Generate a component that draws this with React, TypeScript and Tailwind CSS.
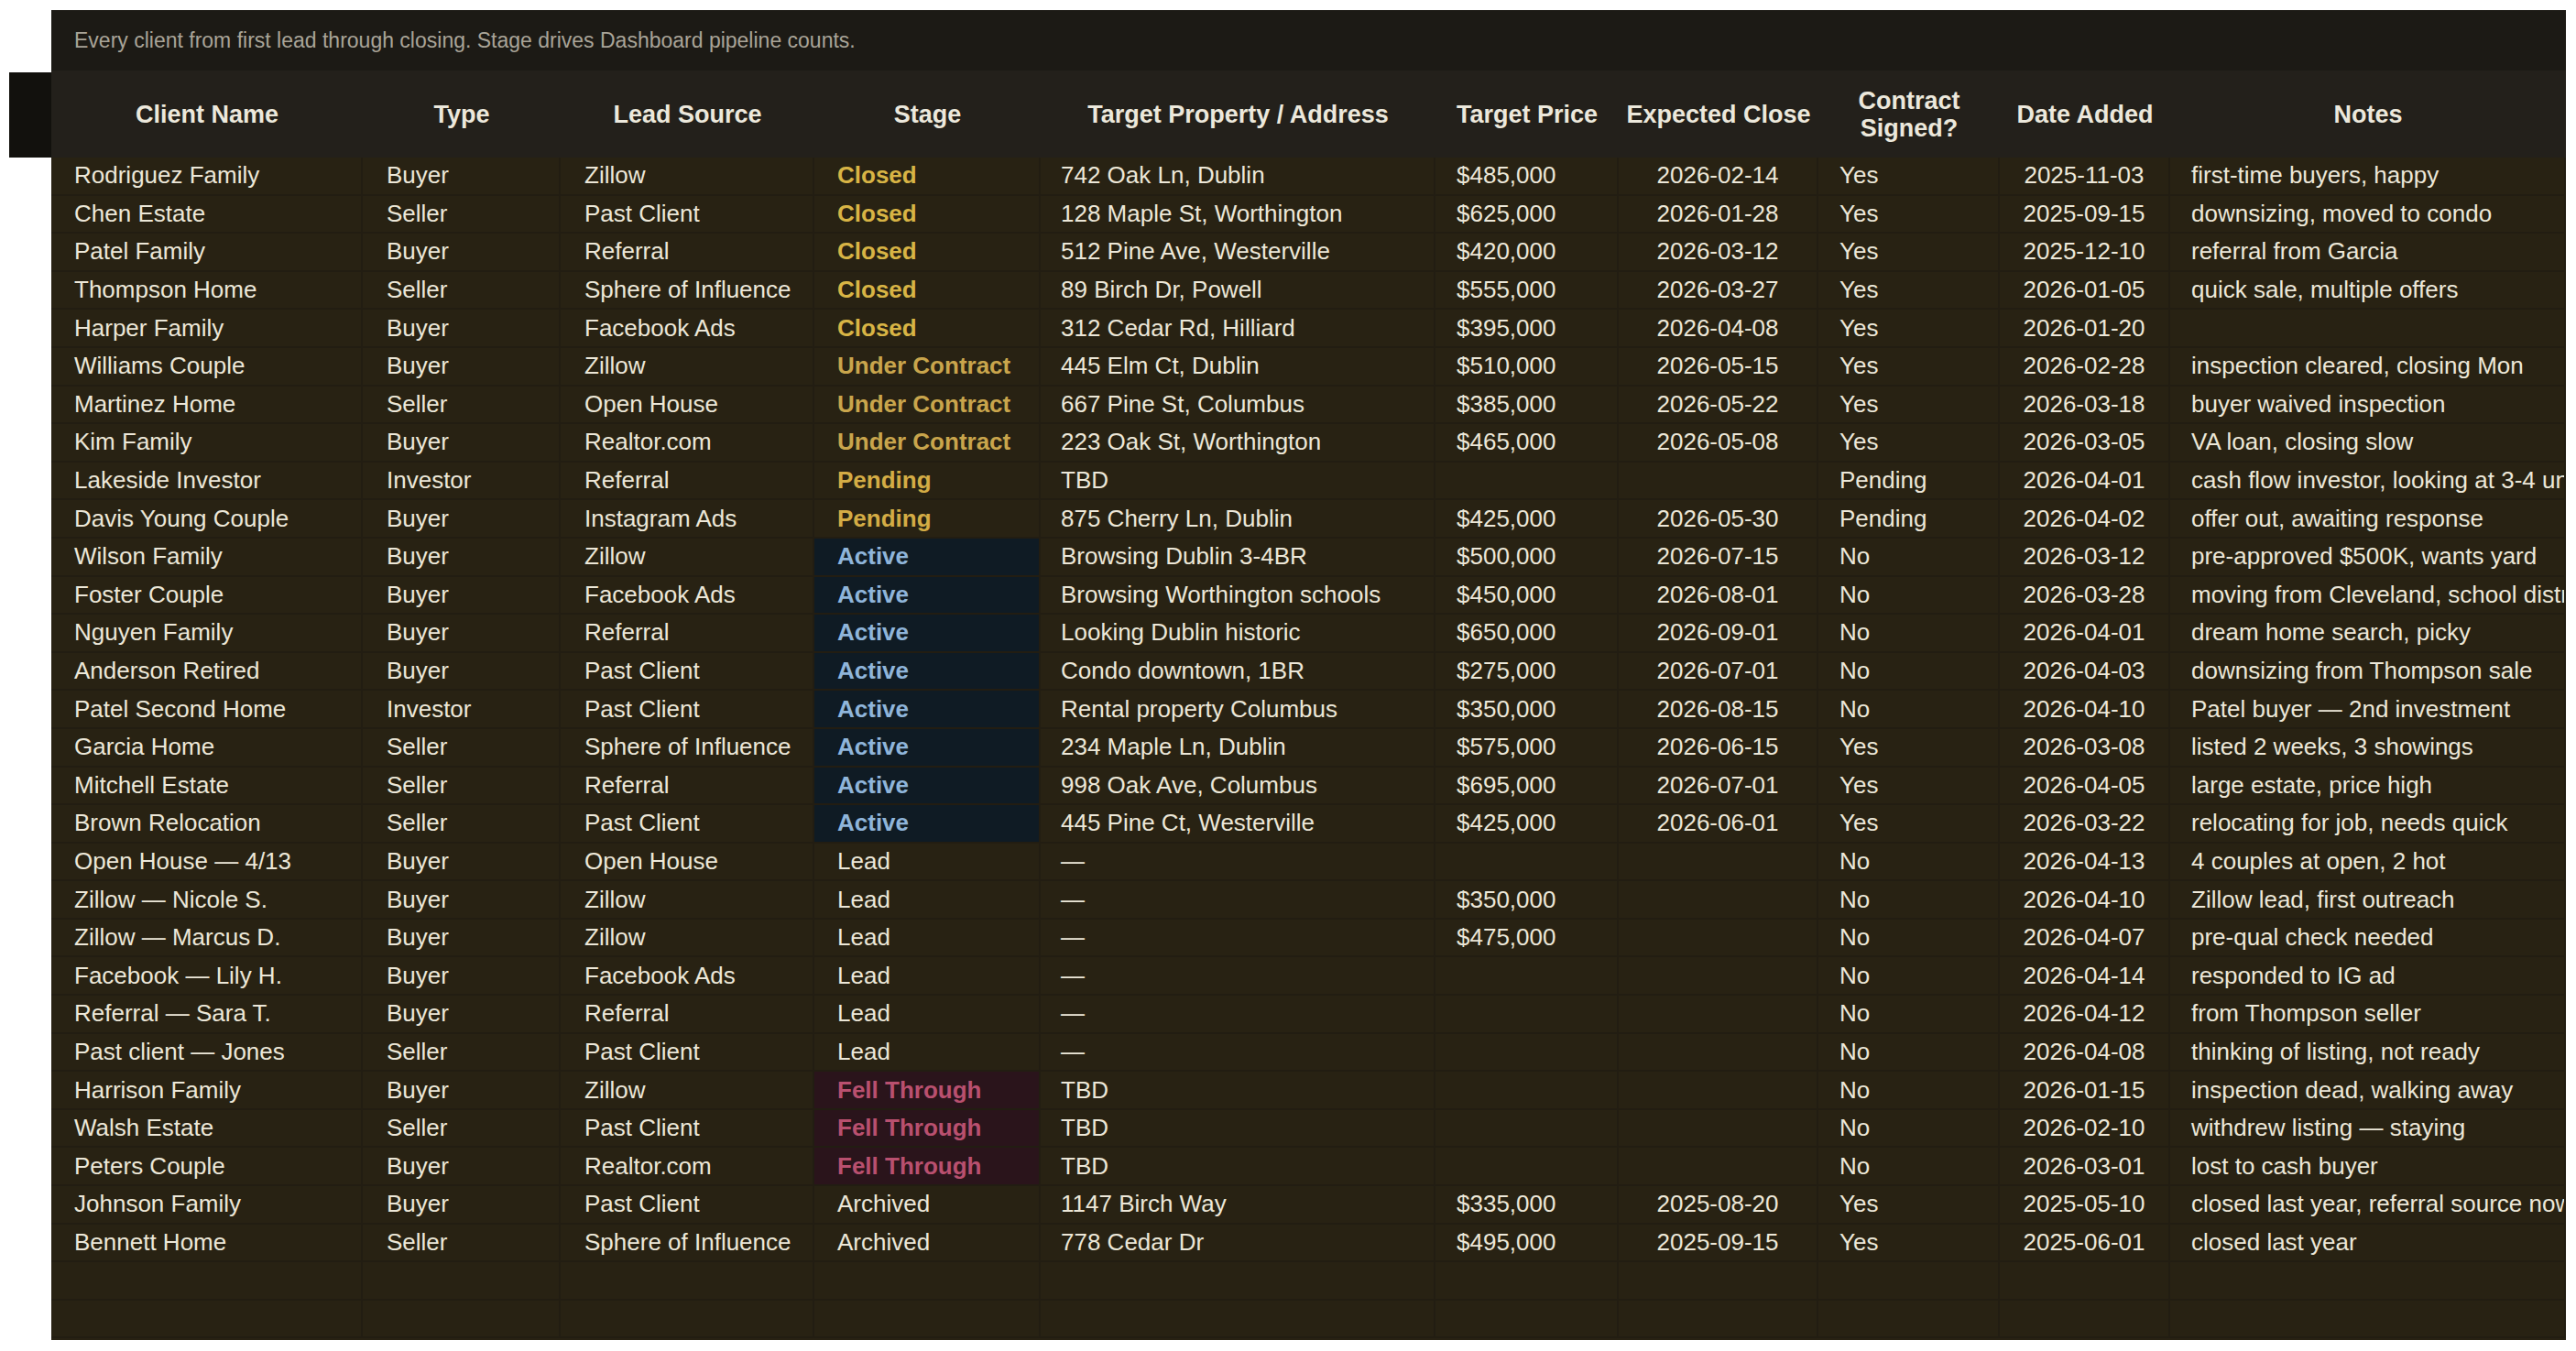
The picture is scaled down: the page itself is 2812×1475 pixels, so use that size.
import React from "react";

type Row = [string, string, string, string, string, string, string, string, string, string];

const rows: Row[] = [
  ["Rodriguez Family", "Buyer", "Zillow", "Closed", "742 Oak Ln, Dublin", "$485,000", "2026-02-14", "Yes", "2025-11-03", "first-time buyers, happy"],
  ["Chen Estate", "Seller", "Past Client", "Closed", "128 Maple St, Worthington", "$625,000", "2026-01-28", "Yes", "2025-09-15", "downsizing, moved to condo"],
  ["Patel Family", "Buyer", "Referral", "Closed", "512 Pine Ave, Westerville", "$420,000", "2026-03-12", "Yes", "2025-12-10", "referral from Garcia"],
  ["Thompson Home", "Seller", "Sphere of Influence", "Closed", "89 Birch Dr, Powell", "$555,000", "2026-03-27", "Yes", "2026-01-05", "quick sale, multiple offers"],
  ["Harper Family", "Buyer", "Facebook Ads", "Closed", "312 Cedar Rd, Hilliard", "$395,000", "2026-04-08", "Yes", "2026-01-20", ""],
  ["Williams Couple", "Buyer", "Zillow", "Under Contract", "445 Elm Ct, Dublin", "$510,000", "2026-05-15", "Yes", "2026-02-28", "inspection cleared, closing Mon"],
  ["Martinez Home", "Seller", "Open House", "Under Contract", "667 Pine St, Columbus", "$385,000", "2026-05-22", "Yes", "2026-03-18", "buyer waived inspection"],
  ["Kim Family", "Buyer", "Realtor.com", "Under Contract", "223 Oak St, Worthington", "$465,000", "2026-05-08", "Yes", "2026-03-05", "VA loan, closing slow"],
  ["Lakeside Investor", "Investor", "Referral", "Pending", "TBD", "", "", "Pending", "2026-04-01", "cash flow investor, looking at 3-4 units"],
  ["Davis Young Couple", "Buyer", "Instagram Ads", "Pending", "875 Cherry Ln, Dublin", "$425,000", "2026-05-30", "Pending", "2026-04-02", "offer out, awaiting response"],
  ["Wilson Family", "Buyer", "Zillow", "Active", "Browsing Dublin 3-4BR", "$500,000", "2026-07-15", "No", "2026-03-12", "pre-approved $500K, wants yard"],
  ["Foster Couple", "Buyer", "Facebook Ads", "Active", "Browsing Worthington schools", "$450,000", "2026-08-01", "No", "2026-03-28", "moving from Cleveland, school district"],
  ["Nguyen Family", "Buyer", "Referral", "Active", "Looking Dublin historic", "$650,000", "2026-09-01", "No", "2026-04-01", "dream home search, picky"],
  ["Anderson Retired", "Buyer", "Past Client", "Active", "Condo downtown, 1BR", "$275,000", "2026-07-01", "No", "2026-04-03", "downsizing from Thompson sale"],
  ["Patel Second Home", "Investor", "Past Client", "Active", "Rental property Columbus", "$350,000", "2026-08-15", "No", "2026-04-10", "Patel buyer — 2nd investment"],
  ["Garcia Home", "Seller", "Sphere of Influence", "Active", "234 Maple Ln, Dublin", "$575,000", "2026-06-15", "Yes", "2026-03-08", "listed 2 weeks, 3 showings"],
  ["Mitchell Estate", "Seller", "Referral", "Active", "998 Oak Ave, Columbus", "$695,000", "2026-07-01", "Yes", "2026-04-05", "large estate, price high"],
  ["Brown Relocation", "Seller", "Past Client", "Active", "445 Pine Ct, Westerville", "$425,000", "2026-06-01", "Yes", "2026-03-22", "relocating for job, needs quick"],
  ["Open House — 4/13", "Buyer", "Open House", "Lead", "—", "", "", "No", "2026-04-13", "4 couples at open, 2 hot"],
  ["Zillow — Nicole S.", "Buyer", "Zillow", "Lead", "—", "$350,000", "", "No", "2026-04-10", "Zillow lead, first outreach"],
  ["Zillow — Marcus D.", "Buyer", "Zillow", "Lead", "—", "$475,000", "", "No", "2026-04-07", "pre-qual check needed"],
  ["Facebook — Lily H.", "Buyer", "Facebook Ads", "Lead", "—", "", "", "No", "2026-04-14", "responded to IG ad"],
  ["Referral — Sara T.", "Buyer", "Referral", "Lead", "—", "", "", "No", "2026-04-12", "from Thompson seller"],
  ["Past client — Jones", "Seller", "Past Client", "Lead", "—", "", "", "No", "2026-04-08", "thinking of listing, not ready"],
  ["Harrison Family", "Buyer", "Zillow", "Fell Through", "TBD", "", "", "No", "2026-01-15", "inspection dead, walking away"],
  ["Walsh Estate", "Seller", "Past Client", "Fell Through", "TBD", "", "", "No", "2026-02-10", "withdrew listing — staying"],
  ["Peters Couple", "Buyer", "Realtor.com", "Fell Through", "TBD", "", "", "No", "2026-03-01", "lost to cash buyer"],
  ["Johnson Family", "Buyer", "Past Client", "Archived", "1147 Birch Way", "$335,000", "2025-08-20", "Yes", "2025-05-10", "closed last year, referral source now"],
  ["Bennett Home", "Seller", "Sphere of Influence", "Archived", "778 Cedar Dr", "$495,000", "2025-09-15", "Yes", "2025-06-01", "closed last year"],
];

const grid =
  "grid grid-cols-[340px_216px_277px_247px_431px_200px_218px_198px_186px_1fr]";

const stageStyle = (s: string) => {
  if (s === "Closed") return "font-bold text-[#d8b445]";
  if (s === "Under Contract") return "font-bold text-[#c9a54c]";
  if (s === "Pending") return "font-bold text-[#d4ac45]";
  if (s === "Active") return "font-bold text-[#8fb5da] bg-[#0f1b24]";
  if (s === "Fell Through") return "font-bold text-[#b9506f] bg-[#2a141b]";
  return "";
};

const cell = "h-[41.6px] flex items-center border-r-2 border-b-2 border-[#221d12] whitespace-nowrap overflow-hidden";

export default function App() {
  return (
    <div className="w-[2812px] h-[1475px] bg-white flex font-[Liberation_Sans,Arial,sans-serif] text-[26px] text-[#ece7d8] overflow-hidden">
      <div className="w-[10px]" />
      <div className="mt-[79px] w-[46px] h-[93px] bg-[#12110d]" />
      <div className="mt-[11px] w-[2745px] h-[1452px] flex flex-col overflow-hidden bg-[#282213]">
        <div className="h-[66px] shrink-0 bg-[#1c1a15] flex items-center pl-[25px] text-[23px] text-[#a9a498]">
          Every client from first lead through closing. Stage drives Dashboard pipeline counts.
        </div>
        <div className={`${grid} h-[95px] shrink-0 bg-[#23201b] font-bold text-[27px] leading-[30px] text-[#ece8dc]`}>
          {["Client Name", "Type", "Lead Source", "Stage", "Target Property / Address", "Target Price", "Expected Close", "Contract\nSigned?", "Date Added", "Notes"].map((h) => (
            <div key={h} className="flex items-center justify-center text-center whitespace-pre-line">
              {h}
            </div>
          ))}
        </div>
        {rows.map((r, i) => (
          <div key={i} className={`${grid} bg-[#282213]`}>
            <div className={`${cell} pl-[25px]`}>{r[0]}</div>
            <div className={`${cell} pl-[26px]`}>{r[1]}</div>
            <div className={`${cell} pl-[26px]`}>{r[2]}</div>
            <div className={`${cell} pl-[25px] ${stageStyle(r[3])}`}>{r[3]}</div>
            <div className={`${cell} pl-[22px]`}>{r[4]}</div>
            <div className={`${cell} pl-[23px]`}>{r[5]}</div>
            <div className={`${cell} justify-center`}>{r[6]}</div>
            <div className={`${cell} pl-[23px]`}>{r[7]}</div>
            <div className={`${cell} justify-center`}>{r[8]}</div>
            <div className={`${cell} pl-[23px] border-r-0`}>{r[9]}</div>
          </div>
        ))}
        {[0, 1].map((i) => (
          <div key={"e" + i} className={`${grid} bg-[#282213]`}>
            {Array.from({ length: 10 }).map((_, j) => (
              <div key={j} className={cell} />
            ))}
          </div>
        ))}
      </div>
    </div>
  );
}
